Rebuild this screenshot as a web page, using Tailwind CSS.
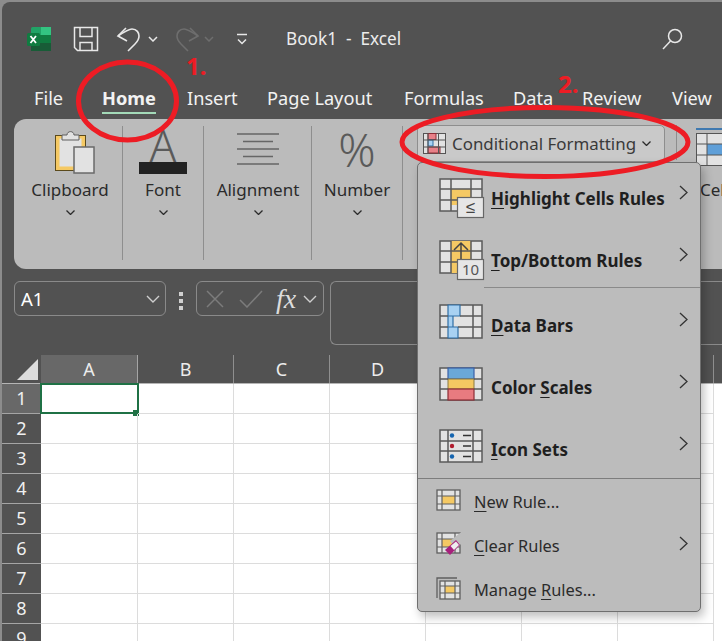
<!DOCTYPE html>
<html lang="en">
<head>
    <meta charset="UTF-8">
    <title>Book1 - Excel</title>
    <script src="https://cdn.jsdelivr.net/npm/@tailwindcss/browser@4"></script>
</head>
<body class="bg-[#8c8c8c]">
<div class="relative w-[722px] h-[641px] overflow-hidden bg-[#8c8c8c] font-['Noto_Sans',sans-serif]">
    <div class="ml-[2px] mt-[2px] h-[639px] rounded-tl-[8px] bg-[#525252] text-white">

        <!-- Title bar -->
        <div class="flex items-center h-[74px] pl-[24px]">
            <svg class="w-[26px] h-[26px]" viewBox="0 0 26 26">
                <rect x="5" y="1" width="20" height="24" rx="1.500" fill="#21a366"/>
                <rect x="15" y="1" width="10" height="8" fill="#33c481"/>
                <rect x="5" y="9" width="20" height="8" fill="#107c41"/>
                <rect x="5" y="17" width="20" height="8" fill="#185c37"/>
                <rect x="1" y="7" width="13" height="13" rx="1.500" fill="#107c41"/>
                <path d="M4.500 10l5.500 7M10 10l-5.500 7" stroke="#fff" stroke-width="1.800" fill="none"/>
            </svg>
            <svg class="w-[26px] h-[26px] ml-[21px]" viewBox="0 0 26 26" fill="none" stroke="#e8e8e8" stroke-width="1.500">
                <path d="M1.500 1.500h23v23H4.500l-3-3z"/>
                <path d="M7 1.500v9h12v-9M7 24.500v-8h12v8"/>
            </svg>
            <svg class="w-[26px] h-[26px] ml-[17px]" viewBox="0 0 26 26" fill="none" stroke="#e8e8e8" stroke-width="1.600">
                <path d="M2 10C8 6 13 3 16 3c5 0 7 4 7 7 0 3-2 6-4 8l-7 7"/>
                <path d="M10 2L2 10l9 5"/>
            </svg>
            <svg class="w-[10px] h-[6px] ml-[6px]" viewBox="0 0 10 6" fill="none" stroke="#e8e8e8" stroke-width="1.500"><path d="M1 1l4 4 4-4"/></svg>
            <svg class="w-[26px] h-[26px] ml-[16px]" viewBox="0 0 26 26" fill="none" stroke="#6e6e6e" stroke-width="1.600">
                <path d="M24 10C18 6 13 3 10 3 5 3 3 7 3 10c0 3 2 6 4 8l7 7"/>
                <path d="M16 2l8 8-9 5"/>
            </svg>
            <svg class="w-[10px] h-[6px] ml-[4px]" viewBox="0 0 10 6" fill="none" stroke="#6e6e6e" stroke-width="1.500"><path d="M1 1l4 4 4-4"/></svg>
            <svg class="w-[12px] h-[12px] ml-[22px]" viewBox="0 0 12 12" fill="none" stroke="#e8e8e8" stroke-width="1.500"><path d="M1 1.500h10M2 6.500l4 4 4-4"/></svg>
            <span class="ml-[38px] text-[17.2px] leading-none text-[#ececec] whitespace-pre">Book1  -  Excel</span>
            <svg class="w-[22px] h-[22px] ml-auto mr-[39px]" viewBox="0 0 22 22" fill="none" stroke="#e8e8e8" stroke-width="1.500">
                <circle cx="14" cy="8" r="6.500"/><path d="M9.500 13L2 21"/>
            </svg>
        </div>

        <!-- Tabs -->
        <div class="flex items-start h-[43px] pl-[32px] text-[18.2px] leading-[24px] text-[#f2f2f2]">
            <span class="w-[68px] pt-[10px]">File</span>
            <span class="w-[85px] pt-[10px] font-bold">
                <span class="inline-block h-[28px] border-b-[2px] border-[#a3d9b8]">Home</span>
            </span>
            <span class="w-[80px] pt-[10px]">Insert</span>
            <span class="w-[137px] pt-[10px]">Page Layout</span>
            <span class="w-[109px] pt-[10px]">Formulas</span>
            <span class="w-[69px] pt-[10px]">Data</span>
            <span class="w-[90px] pt-[10px]">Review</span>
            <span class="pt-[10px]">View</span>
        </div>

        <!-- Ribbon -->
        <div class="flex items-start h-[150px] ml-[12px] rounded-l-[12px] bg-[#bbbbbb] text-[#2b2b2b]">
            <div class="flex flex-col items-center w-[109px] h-[134px] mt-[7px] border-r border-[#8e8e8e] pl-[4px]">
                <svg class="w-[42px] h-[46px] mt-[3px] ml-[8px]" viewBox="0 0 42 46">
                    <rect x="2.500" y="6.500" width="30" height="35" fill="#f5c964" stroke="#5b4a1c"/>
                    <rect x="6.500" y="9.500" width="22" height="28" fill="#e2e2e2"/>
                    <path d="M9 11V6h5c0-4.500 7-4.500 7 0h5v5z" fill="#e2e2e2" stroke="#5f5f5f"/>
                    <rect x="21" y="18" width="20" height="26" fill="#e2e2e2" stroke="#6a6a6a" stroke-width="1.500"/>
                </svg>
                <span class="mt-[3px] text-[17px] leading-[24px]">Clipboard</span>
                <svg class="w-[9px] h-[5px] mt-[8px]" viewBox="0 0 9 5" fill="none" stroke="#2b2b2b" stroke-width="1.300"><path d="M.5.500l4 4 4-4"/></svg>
            </div>
            <div class="flex flex-col items-center w-[81px] h-[134px] mt-[7px] border-r border-[#8e8e8e]">
                <span class="h-[36px] text-[44px] leading-[38px] font-light text-[#5a5a5a]">A</span>
                <span class="w-[48px] h-[12px] bg-[#222222]"></span>
                <span class="mt-[4px] text-[17px] leading-[24px]">Font</span>
                <svg class="w-[9px] h-[5px] mt-[8px]" viewBox="0 0 9 5" fill="none" stroke="#2b2b2b" stroke-width="1.300"><path d="M.5.500l4 4 4-4"/></svg>
            </div>
            <div class="flex flex-col items-center w-[108px] h-[134px] mt-[7px] border-r border-[#8e8e8e] pl-[1px]">
                <svg class="w-[42px] h-[32px] mt-[7px] mb-[12px]" viewBox="0 0 42 32" stroke="#666666" stroke-width="1.300">
                    <path d="M0 1h42M6 8.500h30M0 16h42M6 23.500h30M0 31h42"/>
                </svg>
                <span class="mt-[1px] text-[17px] leading-[24px]">Alignment</span>
                <svg class="w-[9px] h-[5px] mt-[8px]" viewBox="0 0 9 5" fill="none" stroke="#2b2b2b" stroke-width="1.300"><path d="M.5.500l4 4 4-4"/></svg>
            </div>
            <div class="flex flex-col items-center w-[91px] h-[134px] mt-[7px] border-r border-[#8e8e8e]">
                <span class="h-[52px] text-[46px] leading-[46px] font-light text-[#5a5a5a]">%</span>
                <span class="text-[17px] leading-[24px]">Number</span>
                <svg class="w-[9px] h-[5px] mt-[8px]" viewBox="0 0 9 5" fill="none" stroke="#2b2b2b" stroke-width="1.300"><path d="M.5.500l4 4 4-4"/></svg>
            </div>
            <div class="flex items-center w-[248px] h-[37px] ml-[14px] mt-[6px] pl-[5px] rounded-[5px] border border-[#8e8e8e] bg-[#c9c9c9] text-[#3a3a3a]">
                <svg class="w-[23px] h-[21px]" viewBox="0 0 23 21">
                    <rect x=".5" y=".5" width="22" height="20" fill="#e2e2e2" stroke="#555"/>
                    <rect x="5" y=".5" width="8" height="6" fill="#e88088" stroke="#8d2e36"/>
                    <rect x="5" y="7" width="5" height="6" fill="#a8d1f2" stroke="#2f6ea5"/>
                    <rect x="5" y="14" width="12" height="6" fill="#e88088" stroke="#8d2e36"/>
                    <path d="M15.500 0v21M5 0v21M0 7h23M0 14h23" stroke="#555" fill="none"/>
                </svg>
                <span class="ml-[6px] pt-[1px] text-[16.9px] leading-none">Conditional Formatting</span>
                <svg class="w-[9px] h-[5px] ml-[6px]" viewBox="0 0 9 5" fill="none" stroke="#2b2b2b" stroke-width="1.300"><path d="M.5.500l4 4 4-4"/></svg>
            </div>
            <div class="w-px h-[35px] ml-[11px] mt-[6px] bg-[#8e8e8e]"></div>
            <div class="ml-[19px] mt-[9px] w-[26px] overflow-hidden">
                <div class="h-[2px] w-[26px] bg-[#3f79b0]"></div>
                <svg class="w-[40px] h-[33px] mt-[3px]" viewBox="0 0 40 33">
                    <rect x=".5" y=".5" width="39" height="32" fill="#e2e2e2" stroke="#555"/>
                    <rect x="11" y="11" width="29" height="11" fill="#5f9fd8"/>
                    <path d="M11 0v33M0 11h40M0 22h40" stroke="#555" fill="none"/>
                </svg>
                <div class="mt-[12px] ml-[4px] text-[17px] leading-[24px]">Cells</div>
            </div>
        </div>

        <!-- Formula bar -->
        <div class="flex items-start h-[86px] pt-[12px] pl-[12px]">
            <div class="flex items-center justify-between w-[152px] h-[35px] pl-[6px] pr-[5px] rounded-[6px] border border-[#8a8a8a] text-[18.5px]">
                <span>A1</span>
                <svg class="w-[14px] h-[8px]" viewBox="0 0 14 8" fill="none" stroke="#cfcfcf" stroke-width="1.400"><path d="M1 1l6 6 6-6"/></svg>
            </div>
            <div class="flex flex-col gap-[3px] ml-[13px] mt-[11px]">
                <span class="w-[4px] h-[4px] bg-[#d0d0d0]"></span>
                <span class="w-[4px] h-[4px] bg-[#d0d0d0]"></span>
                <span class="w-[4px] h-[4px] bg-[#d0d0d0]"></span>
            </div>
            <div class="flex items-center w-[128px] h-[35px] ml-[13px] pl-[9px] rounded-[6px] border border-[#8a8a8a]">
                <svg class="w-[18px] h-[18px]" viewBox="0 0 18 18" fill="none" stroke="#7c7c7c" stroke-width="1.500"><path d="M1 1l16 16M17 1L1 17"/></svg>
                <svg class="w-[24px] h-[18px] ml-[15px]" viewBox="0 0 24 18" fill="none" stroke="#7c7c7c" stroke-width="1.500"><path d="M1 10l7 7L23 1"/></svg>
                <span class="ml-[13px] text-[28px] leading-none italic font-['Liberation_Serif',serif] text-[#dcdcdc]">fx</span>
                <svg class="w-[14px] h-[8px] ml-[7px]" viewBox="0 0 14 8" fill="none" stroke="#cfcfcf" stroke-width="1.400"><path d="M1 1l6 6 6-6"/></svg>
            </div>
            <div class="flex-1 h-[64px] ml-[6px] rounded-l-[6px] border border-r-0 border-[#8a8a8a]"></div>
        </div>

        <!-- Column headers -->
        <div class="flex h-[29px] border-b border-[#b5b5b5] text-[18px] text-[#ececec]">
            <div class="w-[39px] pl-[15px] pt-[4px]">
                <svg class="w-[21px] h-[21px]" viewBox="0 0 21 21"><path d="M0 21L21 0v21z" fill="#dcdcdc"/></svg>
            </div>
            <div class="w-[97px] flex items-center justify-center bg-[#686868] border-r border-[#a5a5a5]">A</div>
            <div class="w-[96px] flex items-center justify-center border-r border-[#8f8f8f]">B</div>
            <div class="w-[96px] flex items-center justify-center border-r border-[#8f8f8f]">C</div>
            <div class="w-[96px] flex items-center justify-center border-r border-[#8f8f8f]">D</div>
            <div class="w-[96px] border-r border-[#8f8f8f]"></div>
            <div class="w-[96px] border-r border-[#8f8f8f]"></div>
            <div class="w-[96px] border-r border-[#8f8f8f]"></div>
        </div>

        <!-- Rows -->
        <div id="rows" class="bg-white"></div>
    </div>

    <!-- Conditional Formatting menu -->
    <div class="absolute left-[417px] top-[162px] w-[284px] h-[450px] pt-[4px] rounded-[5px] border border-[#6f6f6f] bg-[#bcbcbc] text-[#1f1f1f] shadow-[3px_5px_10px_rgba(0,0,0,0.25)]">
        <div class="relative flex items-center h-[62px] pl-[21px] pr-[12px]">
            <svg class="w-[45px] h-[40px] overflow-visible" viewBox="0 0 45 40">
                <rect x="1" y="1" width="42" height="32" fill="#e2e2e2" stroke="#5a5a5a" stroke-width="1.500"/>
                <rect x="12" y="11" width="20" height="16" fill="#f5c964"/>
                <path d="M12 1v32M32 1v32M1 11h42M1 22h42" stroke="#5a5a5a" stroke-width="1.500" fill="none"/>
                <rect x="18.500" y="19.500" width="26" height="20" fill="#e6e6e6" stroke="#666666" stroke-width="1.200"/>
                <text x="31.500" y="35" text-anchor="middle" font-size="17" fill="#444444">≤</text>
            </svg>
            <span class="ml-[7px] mt-[2px] text-[17px] font-bold"><span class="underline underline-offset-[3px]">H</span>ighlight Cells Rules</span>
            <svg class="w-[9px] h-[15px] ml-auto mb-[12px]" viewBox="0 0 9 15" fill="none" stroke="#333333" stroke-width="1.300"><path d="M1 1l7 6.500L1 14"/></svg>
        </div>
        <div class="relative flex items-center h-[62px] pl-[21px] pr-[12px]">
            <svg class="w-[45px] h-[40px] overflow-visible" viewBox="0 0 45 40">
                <rect x="1" y="1" width="42" height="32" fill="#e2e2e2" stroke="#5a5a5a" stroke-width="1.500"/>
                <rect x="12" y="1" width="20" height="32" fill="#f5c964"/>
                <path d="M12 1v32M32 1v32M1 11h42M1 22h42" stroke="#5a5a5a" stroke-width="1.500" fill="none"/>
                <path d="M22 20V3M15 10l7-7 7 7" stroke="#444444" stroke-width="1.500" fill="none"/>
                <rect x="18.500" y="19.500" width="26" height="20" fill="#e6e6e6" stroke="#666666" stroke-width="1.200"/>
                <text x="31.500" y="35" text-anchor="middle" font-size="15" fill="#555555">10</text>
            </svg>
            <span class="ml-[7px] mt-[2px] text-[17px] font-bold"><span class="underline underline-offset-[3px]">T</span>op/Bottom Rules</span>
            <svg class="w-[9px] h-[15px] ml-auto mb-[12px]" viewBox="0 0 9 15" fill="none" stroke="#333333" stroke-width="1.300"><path d="M1 1l7 6.500L1 14"/></svg>
            <div class="absolute left-[66px] right-0 top-[58px] h-px bg-[#8a8a8a]"></div>
        </div>
        <div class="flex items-center h-[62px] pl-[21px] pr-[12px]">
            <svg class="w-[45px] h-[36px]" viewBox="0 0 45 36">
                <rect x="1" y="1" width="42" height="33" fill="#e2e2e2" stroke="#5a5a5a" stroke-width="1.500"/>
                <path d="M9 1h12v11H9zM9 12h5v11H9zM9 23h10v11H9z" fill="#a8d1f2" stroke="#2f6ea5" stroke-width="1.200"/>
                <path d="M34 1v33M1 12h8M21 12h22M1 23h8M19 23h24" stroke="#5a5a5a" stroke-width="1.500" fill="none"/>
            </svg>
            <span class="ml-[7px] mt-[8px] text-[17px] font-bold"><span class="underline underline-offset-[3px]">D</span>ata Bars</span>
            <svg class="w-[9px] h-[15px] ml-auto mb-[6px]" viewBox="0 0 9 15" fill="none" stroke="#333333" stroke-width="1.300"><path d="M1 1l7 6.500L1 14"/></svg>
        </div>
        <div class="flex items-center h-[62px] pl-[21px] pr-[12px]">
            <svg class="w-[45px] h-[34px]" viewBox="0 0 45 34">
                <rect x="1" y="1" width="42" height="32" fill="#e2e2e2" stroke="#5a5a5a" stroke-width="1.500"/>
                <rect x="9" y="1" width="26" height="11" fill="#6aa8d8" stroke="#3b60a8" stroke-width="1.200"/>
                <rect x="9" y="12" width="26" height="10" fill="#f4c862" stroke="#8a7a40" stroke-width="1"/>
                <rect x="9" y="22" width="26" height="11" fill="#e87b80" stroke="#8d2e36" stroke-width="1.200"/>
                <path d="M1 12h8M1 22h8M35 12h8M35 22h8" stroke="#5a5a5a" stroke-width="1.500" fill="none"/>
            </svg>
            <span class="ml-[7px] mt-[8px] text-[17px] font-bold">Color <span class="underline underline-offset-[3px]">S</span>cales</span>
            <svg class="w-[9px] h-[15px] ml-auto mb-[6px]" viewBox="0 0 9 15" fill="none" stroke="#333333" stroke-width="1.300"><path d="M1 1l7 6.500L1 14"/></svg>
        </div>
        <div class="flex items-center h-[62px] pl-[21px] pr-[12px]">
            <svg class="w-[45px] h-[34px]" viewBox="0 0 45 34">
                <rect x="1" y="1" width="42" height="32" fill="#e2e2e2" stroke="#5a5a5a" stroke-width="1.500"/>
                <path d="M9 1v32M34 1v32M1 12h42M1 22h42" stroke="#5a5a5a" stroke-width="1.500" fill="none"/>
                <circle cx="13" cy="6.500" r="2.200" fill="#1565b0"/>
                <circle cx="13" cy="17" r="2.200" fill="#b01c2e"/>
                <circle cx="13" cy="27.500" r="2.200" fill="#1565b0"/>
                <path d="M24 6.500h8M24 17h8M24 27.500h8" stroke="#333333" stroke-width="1.300"/>
            </svg>
            <span class="ml-[7px] mt-[8px] text-[17px] font-bold"><span class="underline underline-offset-[3px]">I</span>con Sets</span>
            <svg class="w-[9px] h-[15px] ml-auto mb-[6px]" viewBox="0 0 9 15" fill="none" stroke="#333333" stroke-width="1.300"><path d="M1 1l7 6.500L1 14"/></svg>
        </div>
        <div class="h-px mt-[1px] mb-[2px] bg-[#7d7d7d]"></div>
        <div class="flex items-center h-[44px] pl-[18px] pr-[12px] text-[#2b2b2b]">
            <svg class="w-[25px] h-[22px] mb-[6px]" viewBox="0 0 25 22">
                <rect x="1" y="1" width="23" height="20" fill="#e2e2e2" stroke="#5f5f5f" stroke-width="1.300"/>
                <rect x="6" y="7" width="13" height="8" fill="#f5c964"/>
                <path d="M6 1v20M19 1v20M1 7h23M1 15h23" stroke="#5f5f5f" stroke-width="1.200" fill="none"/>
            </svg>
            <span class="ml-[13px] mb-[2px] text-[16.4px]"><span class="underline underline-offset-[3px]">N</span>ew Rule...</span>
        </div>
        <div class="flex items-center h-[44px] pl-[18px] pr-[12px] text-[#2b2b2b]">
            <svg class="w-[25px] h-[24px] mb-[6px]" viewBox="0 0 25 24">
                <rect x="1" y="1" width="23" height="20" fill="#e2e2e2" stroke="#5f5f5f" stroke-width="1.300"/>
                <rect x="6" y="7" width="13" height="8" fill="#f5c964"/>
                <path d="M6 1v20M19 1v20M1 7h23M1 15h23" stroke="#5f5f5f" stroke-width="1.200" fill="none"/>
                <path d="M24 1L14 9l6 8 5-5V1z" fill="#bcbcbc"/>
                <path d="M9 18L20 8l4 5-10 10z" fill="#a8207c"/>
                <path d="M14.500 14L20 9.500l3 3.500-5 5z" fill="#eeeeee"/>
            </svg>
            <span class="ml-[13px] mb-[2px] text-[16.4px]"><span class="underline underline-offset-[3px]">C</span>lear Rules</span>
            <svg class="w-[9px] h-[15px] ml-auto mb-[8px]" viewBox="0 0 9 15" fill="none" stroke="#333333" stroke-width="1.300"><path d="M1 1l7 6.500L1 14"/></svg>
        </div>
        <div class="flex items-center h-[44px] pl-[18px] pr-[12px] text-[#2b2b2b]">
            <svg class="w-[25px] h-[23px] mb-[6px]" viewBox="0 0 25 23">
                <path d="M21 1H1v20" stroke="#5f5f5f" stroke-width="1.300" fill="none"/>
                <rect x="4" y="4" width="20" height="18" fill="#e2e2e2" stroke="#5f5f5f" stroke-width="1.300"/>
                <rect x="9" y="9" width="10" height="7" fill="#f5c964"/>
                <path d="M9 4v18M19 4v18M4 9h20M4 16h20" stroke="#5f5f5f" stroke-width="1.200" fill="none"/>
            </svg>
            <span class="ml-[13px] mb-[2px] text-[16.4px]">Manage <span class="underline underline-offset-[3px]">R</span>ules...</span>
        </div>
    </div>

    <!-- Red annotations drawn over the screenshot -->
    <svg class="absolute left-0 top-0 w-[722px] h-[641px] pointer-events-none" viewBox="0 0 722 641" fill="none" stroke="#ed1c24" stroke-width="5">
        <ellipse cx="127.500" cy="101" rx="49" ry="39"/>
        <ellipse cx="545" cy="142" rx="143" ry="34.500"/>
    </svg>
    <span class="absolute left-[186px] top-[51px] text-[24px] leading-[30px] font-bold text-[#ed1c24]">1.</span>
    <span class="absolute left-[558px] top-[69px] text-[24px] leading-[30px] font-bold text-[#ed1c24]">2.</span>
</div>

<script>
    // Build the sheet rows, 1 to 9
    const rows = document.getElementById("rows");
    for (let r = 1; r <= 9; r++) {
        const row = document.createElement("div");
        row.className = "flex h-[30px]";
        const head = document.createElement("div");
        head.className = r === 1
            ? "w-[39px] flex items-center justify-center bg-[#686868] border-b border-[#a5a5a5] text-[18px] text-[#f0f0f0]"
            : "w-[39px] flex items-center justify-center bg-[#525252] border-b border-[#a5a5a5] text-[18px] text-[#f0f0f0]";
        head.textContent = r;
        row.appendChild(head);
        for (let c = 0; c < 7; c++) {
            const cell = document.createElement("div");
            cell.className = c === 0
                ? "relative w-[97px] border-r border-b border-[#dcdcdc]"
                : "relative w-[96px] border-r border-b border-[#dcdcdc]";
            if (r === 1 && c === 0) {
                cell.innerHTML = '<div class="absolute -left-px -top-px w-[99px] h-[31px] border-2 border-[#1f7145]"></div><div class="absolute -right-[2px] -bottom-[3px] w-[6px] h-[6px] bg-[#1f7145]"></div>';
            }
            row.appendChild(cell);
        }
        rows.appendChild(row);
    }
</script>
</body>
</html>
